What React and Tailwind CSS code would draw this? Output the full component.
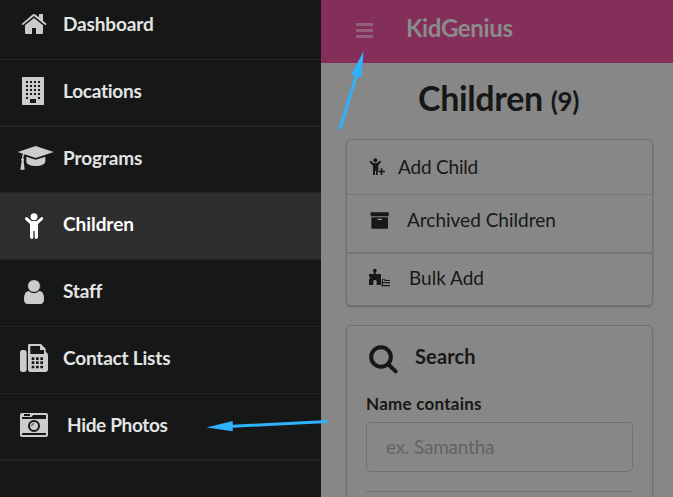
import React from "react";

function HomeIcon() {
  return (
    <svg className="h-[59px] w-14 shrink-0" viewBox="0 0 168 177" fill="currentColor">
      <path d="M102 54 L129 76 V98 Q129 102 125 102 H108 V84 H96 V102 H79 Q75 102 75 98 V76 Z" />
      <path d="M68 76 L65 72 L97 44 Q102 40 107 44 L117 52 V42 H129 V62 L140 72 L136 76 L102 48 Z" />
    </svg>
  );
}

function BuildingIcon() {
  const cols = [78, 90, 102, 114];
  const rows = [243, 255, 267, 279];
  return (
    <svg className="h-[66px] w-14 shrink-0" viewBox="0 180 168 198">
      <rect x="66" y="231" width="66" height="84" rx="2.5" fill="currentColor" />
      <g fill="#151817">
        {rows.map((y) => cols.map((x) => <rect key={x + "-" + y} x={x} y={y} width="6" height="6" />))}
        <rect x="78" y="291" width="6" height="6" />
        <rect x="114" y="291" width="6" height="6" />
        <rect x="90" y="297" width="18" height="12" />
      </g>
    </svg>
  );
}

function CapIcon() {
  return (
    <svg className="h-[66px] w-14 shrink-0" viewBox="0 -9 168 198" fill="currentColor">
      <path d="M53 66 L107 48 L161 66 L107 84 L74 73 Q70 77 70 85 Q74 88 71 94 L74 119 H61 L65 94 Q61 88 66 85 Q66 76 69 71 Z" />
      <path d="M79 80 L107 89 L136 80 V95 Q134 107 107 108 Q80 107 79 95 Z" />
    </svg>
  );
}

function ChildIcon() {
  return (
    <svg className="h-[66px] w-14 shrink-0" viewBox="0 189 168 198" fill="currentColor">
      <circle cx="102" cy="260" r="10.5" />
      <path d="M76 263 Q80 259 84 264 L94 273 H110 L121 264 Q125 259 129 263 Q131 266 127 270 L114 282 V322 Q114 327 108 327 Q104 327 104 322 V303 H100 V322 Q100 327 96 327 Q90 327 90 322 V282 L77 270 Q74 266 76 263 Z" />
    </svg>
  );
}

function UserIcon() {
  return (
    <svg className="h-[66px] w-14 shrink-0" viewBox="0 0 168 198" fill="currentColor">
      <path d="M86 93 Q102 107 118 93 Q132 93 132 118 Q132 132 121 132 H83 Q72 132 72 118 Q72 94 86 93 Z" />
      <circle cx="102" cy="78" r="19" stroke="#151817" strokeWidth="2" />
    </svg>
  );
}

function FaxIcon() {
  return (
    <svg className="h-[66px] w-14 shrink-0" viewBox="0 201 168 198">
      <rect x="60" y="270" width="20" height="66" rx="8" fill="currentColor" />
      <path fill="currentColor" d="M84 256 Q84 252 88 252 H123 L137 266 V276 Q144 279 144 286 V328 Q144 336 136 336 H92 Q84 336 84 328 Z" />
      <path fill="#151817" d="M91 258 H120 V270 H132 V282 H91 Z" />
      <g fill="#151817">
        {[292, 304, 317].map((y) => [95, 108, 121].map((x) => <rect key={x + "-" + y} x={x} y={y} width="8" height="8" rx="1" />))}
      </g>
    </svg>
  );
}

function CameraIcon() {
  return (
    <svg className="h-[66px] w-14 shrink-0" viewBox="0 42 168 198">
      <rect x="60" y="99" width="84" height="72" rx="6" fill="currentColor" />
      <path fill="#151817" d="M72 102 H90 V108 H72 Z M99 105 H138 V117 H66 V111 H95 Z M66 159 H138 V165 H66 Z" />
      <circle cx="102" cy="138" r="15" fill="none" stroke="#151817" strokeWidth="6" />
      <path d="M95 138 Q95 131 102 131" fill="none" stroke="#151817" strokeWidth="2.5" />
    </svg>
  );
}

const items = [
  { label: "Dashboard", Icon: HomeIcon, row: "h-[60px] border-b", text: "pl-[7px] leading-[48px] tracking-[-0.15px]" },
  { label: "Locations", Icon: BuildingIcon, row: "h-[67px] border-b-2", text: "pl-[7px] leading-[61px] tracking-[-0.25px]" },
  { label: "Programs", Icon: CapIcon, row: "h-[66px] border-b", text: "pl-[7px] leading-[61px] tracking-[-0.1px]" },
  { label: "Children", Icon: ChildIcon, row: "h-[67px] border-b bg-[#2e2e2e] text-white", text: "pl-[7px] leading-[61px] text-white tracking-[-0.05px]" },
  { label: "Staff", Icon: UserIcon, row: "h-[67px] border-b", text: "pl-[7px] leading-[61px] tracking-[-0.2px]" },
  { label: "Contact Lists", Icon: FaxIcon, row: "h-[67px] border-b", text: "pl-[7px] leading-[61px] tracking-[-0.2px]" },
  { label: "Hide Photos", Icon: CameraIcon, row: "h-[67px] border-b-2", text: "pl-[11px] leading-[61px] tracking-[-0.35px]" },
];

function Sidebar() {
  return (
    <nav className="w-[321px] shrink-0 bg-[#151817] text-[#cbcdcc]">
      {items.map(({ label, Icon, row, text }) => (
        <div key={label} className={"flex items-start border-[#232625] " + row}>
          <Icon />
          <span className={"whitespace-nowrap text-[19px] font-bold " + (label === "Children" ? "" : "text-[#e3e4e4] ") + text}>{label}</span>
        </div>
      ))}
    </nav>
  );
}

function AddChildIcon() {
  return (
    <svg className="h-[54px] w-12 shrink-0" viewBox="21 30 144 162" fill="currentColor">
      <circle cx="106" cy="91" r="6" />
      <path d="M89 94 L92 92 L101 99 H111 L120 92 L124 95 L115 106 V120 L113 123 V135 H108 V122 H105 V135 H99 V107 L89 97 Z" />
      <path d="M122 115 H127 V122 H135 V127 H127 V135 H122 V127 H115 V122 H122 Z" />
    </svg>
  );
}

function ArchiveIcon() {
  return (
    <svg className="h-[57px] w-12 shrink-0" viewBox="21 195 144 171">
      <path fill="currentColor" d="M92 247 H146 V259 H92 Z M94 262 H144 V294 Q144 296 142 296 H96 Q94 296 94 294 Z" />
      <rect x="112" y="266" width="14" height="4" rx="2" fill="#9c9c9c" />
    </svg>
  );
}

function BulkIcon() {
  return (
    <svg className="h-[51px] w-12 shrink-0" viewBox="21 87 144 153" fill="currentColor">
      <path d="M101 147 V142 Q98 138 99 135 Q101 131 105 131 Q109 131 110 135 Q111 139 107 142 V147 H123 V180 H110 V169 Q110 165 105 165 Q100 165 100 169 V180 H87 V163 Q92 161 90 157 Q89 155 87 155 V147 Z" />
      <path d="M126 162 H137 V164 H129 V184 H126 Z M133 165 H150 V168 H133 Z M124 171 H150 V175 H124 Z M124 180 H150 V184 H124 Z" />
    </svg>
  );
}

function SearchIcon() {
  return (
    <svg className="mt-[18px] ml-[2px] h-8 w-8 shrink-0" viewBox="84 87 96 96" fill="none" stroke="currentColor">
      <circle cx="123" cy="126" r="29.5" strokeWidth="12" />
      <path d="M145 148 L167 169" strokeWidth="12" strokeLinecap="round" />
    </svg>
  );
}

export default function App() {
  return (
    <div className="relative flex h-[497px] w-[673px] overflow-hidden bg-[#878787] font-['Lato',sans-serif] text-[#171717]">
      <Sidebar />
      <main className="w-[352px] shrink-0">
        <header className="flex h-[63px] bg-[#842f5a]">
          <div className="mt-[23px] ml-[35px] flex w-[17px] flex-col gap-[3px]">
            <i className="h-[3px] bg-[#935f7b]" />
            <i className="h-[3px] bg-[#935f7b]" />
            <i className="h-[3px] bg-[#935f7b]" />
          </div>
          <span className="ml-[33px] whitespace-nowrap text-[24px] leading-[56px] font-bold tracking-[-0.35px] text-[#8b8b8b]">KidGenius</span>
        </header>
        <h1 className="ml-[97px] h-[76px] whitespace-nowrap text-[34px] leading-[70px] font-bold tracking-[-0.35px]">
          Children <span className="text-[26px]">(9)</span>
        </h1>
        <section className="ml-[25px] h-[167px] w-[307px] rounded-[5px] border border-[#707070] text-[19px] shadow-[0_1px_2px_rgba(0,0,0,0.25)]">
          <div className="flex h-[55px] border-b border-[#757575]">
            <AddChildIcon />
            <span className="ml-[3px] leading-[54px] tracking-[-0.2px]">Add Child</span>
          </div>
          <div className="flex h-[59px] border-b-2 border-[#757575]">
            <ArchiveIcon />
            <span className="ml-[12px] leading-[50px]">Archived Children</span>
          </div>
          <div className="flex h-[51px]">
            <BulkIcon />
            <span className="ml-[14px] leading-[48px]">Bulk Add</span>
          </div>
        </section>
        <section className="mt-[19px] ml-[25px] h-[200px] w-[307px] rounded-[5px] border border-[#707070] px-[19px] shadow-[0_1px_2px_rgba(0,0,0,0.2)]">
          <div className="flex h-[66px]">
            <SearchIcon />
            <h2 className="ml-[15px] text-[20px] leading-[60px] font-bold tracking-[0.15px]">Search</h2>
          </div>
          <label className="block h-[30px] text-[17px] leading-[24px] font-bold tracking-[0.25px]">Name contains</label>
          <div className="h-[50px] rounded-[5px] border border-[#707070] pl-[19px] text-[19px] leading-[48px] tracking-[-0.2px] text-[#636363]">ex. Samantha</div>
          <hr className="mt-[19px] border-[#707070]" />
        </section>
      </main>
      <svg className="pointer-events-none absolute inset-0 h-full w-full" viewBox="0 0 673 497" fill="#2eb2fc">
        <path d="M363.7 51 L351.3 74.5 L354.6 75.7 L338.5 128.4 L341.4 129.6 L357.6 76.6 L361.2 77.5 Z" />
        <path d="M206.5 427.4 L232.7 421 V424.8 L327.5 420 V423 L232.7 427.7 V431.2 Z" />
      </svg>
    </div>
  );
}
